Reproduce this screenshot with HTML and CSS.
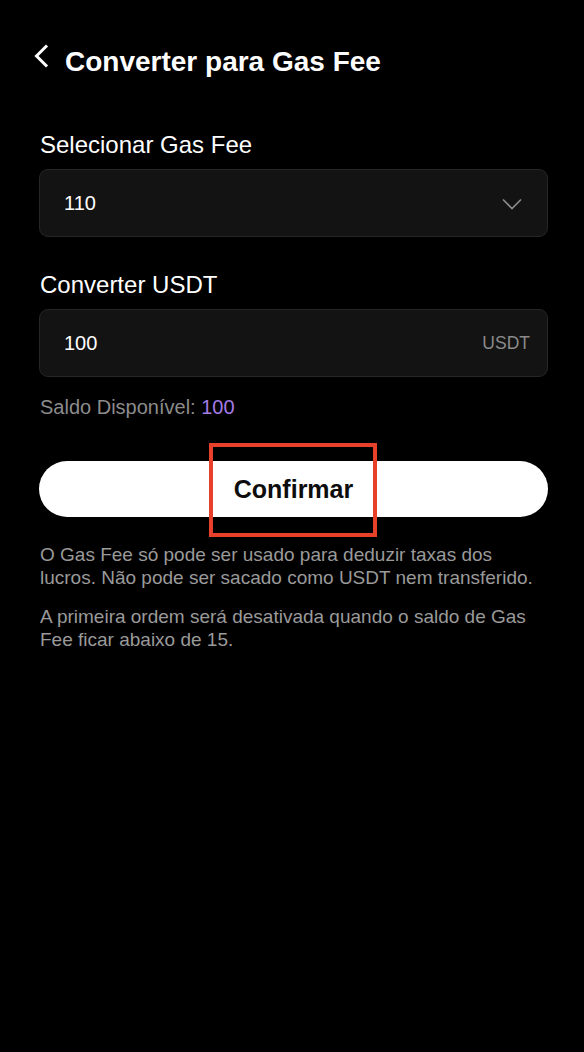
FILE: index.html
```html
<!DOCTYPE html>
<html lang="pt">
<head>
<meta charset="utf-8">
<title>Converter para Gas Fee</title>
<link rel="stylesheet" href="styles.css">
</head>
<body>
<div class="page">
  <header class="topbar">
    <span class="back" aria-label="Voltar">
      <svg width="16" height="24" viewBox="0 0 16 24"><path d="M13 2.5 L3.5 12 L13 21.5" fill="none" stroke="#fff" stroke-width="3" stroke-linecap="square"/></svg>
    </span>
    <h1 class="title">Converter para Gas Fee</h1>
  </header>

  <section class="field field-first">
    <div class="label">Selecionar Gas Fee</div>
    <div class="box">
      <span class="value">110</span>
      <svg class="chev" width="20" height="12" viewBox="0 0 20 12"><path d="M1 1.5 L10 10.5 L19 1.5" fill="none" stroke="#8c8c8c" stroke-width="1.6"/></svg>
    </div>
  </section>

  <section class="field">
    <div class="label">Converter USDT</div>
    <div class="box box-input">
      <span class="value">100</span>
      <span class="unit">USDT</span>
    </div>
    <p class="balance">Saldo Disponível: <span class="amount">100</span></p>
  </section>

  <div class="btn-wrap">
    <div class="confirm">Confirmar</div>
    <span class="highlight"></span>
  </div>

  <div class="notes">
    <p>O Gas Fee só pode ser usado para deduzir taxas dos lucros. Não pode ser sacado como USDT nem transferido.</p>
    <p>A primeira ordem será desativada quando o saldo de Gas Fee ficar abaixo de 15.</p>
  </div>
</div>
</body>
</html>
```

FILE: styles.css
```css
* { box-sizing: border-box; }
html, body { margin: 0; padding: 0; background: #000; }
body {
  font-family: "Liberation Sans", Arial, sans-serif;
  color: #fff;
  width: 584px;
  min-height: 1052px;
}
.page {
  padding: 45px 36px 0 39px;
}
.topbar {
  display: flex;
  align-items: center;
  height: 34px;
}
.back {
  display: flex;
  margin-left: -6px;
  margin-right: 16px;
  margin-top: -13px;
}
.title {
  margin: 0;
  font-size: 28px;
  line-height: 34px;
  font-weight: 700;
  color: #fff;
}
.field { margin-top: 35px; }
.field.field-first { margin-top: 53px; }
.label {
  font-size: 24px;
  line-height: 26px;
  color: #fff;
  margin-bottom: 11px;
  padding-left: 1px;
}
.box {
  height: 68px;
  background: #131313;
  border: 1px solid #262626;
  border-radius: 9px;
  display: flex;
  align-items: center;
  justify-content: space-between;
  padding: 0 25px 0 24px;
}
.box-input { padding-right: 17px; }
.value {
  font-size: 20px;
  color: #fff;
}
.chev { margin-top: 2px; }
.unit {
  font-size: 17.5px;
  color: #8a8a8a;
}
.balance {
  margin: 19px 0 0 1px;
  font-size: 20px;
  line-height: 22px;
  color: #8c8c8c;
}
.amount { color: #a57be6; }
.btn-wrap {
  position: relative;
  margin-top: 43px;
}
.confirm {
  height: 56px;
  border-radius: 28px;
  background: #fff;
  color: #0d0d0d;
  font-size: 25px;
  font-weight: 700;
  display: flex;
  align-items: center;
  justify-content: center;
}
.highlight {
  position: absolute;
  left: 170px;
  top: -18px;
  width: 168px;
  height: 94px;
  border: 4px solid #e8412b;
}
.notes {
  margin-top: 26px;
  padding-left: 1px;
}
.notes p {
  margin: 0 0 16px;
  font-size: 19px;
  line-height: 23px;
  color: #9a9a9a;
}
```
